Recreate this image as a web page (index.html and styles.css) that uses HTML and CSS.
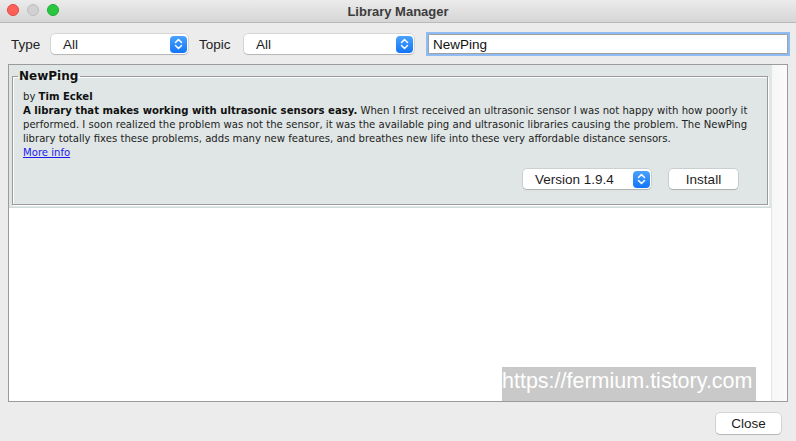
FILE: index.html
```html
<!DOCTYPE html>
<html>
<head>
    <title>Library Manager</title>
    <link rel="stylesheet" href="styles.css">
</head>
<body>
    <div class="window">
        <div class="titlebar">
            <div class="lights">
                <span class="light red"></span>
                <span class="light gray"></span>
                <span class="light green"></span>
            </div>
            <div class="title">Library Manager</div>
        </div>

        <div class="toolbar">
            <span class="label type-label">Type</span>
            <div class="select type-select">
                <span>All</span>
                <span class="stepper">
                    <svg width="9" height="12" viewBox="0 0 9 12"><path d="M1.5 4.5 L4.5 1.5 L7.5 4.5 M1.5 7.5 L4.5 10.5 L7.5 7.5" fill="none" stroke="white" stroke-width="1.5" stroke-linecap="round" stroke-linejoin="round"/></svg>
                </span>
            </div>
            <span class="label topic-label">Topic</span>
            <div class="select topic-select">
                <span>All</span>
                <span class="stepper">
                    <svg width="9" height="12" viewBox="0 0 9 12"><path d="M1.5 4.5 L4.5 1.5 L7.5 4.5 M1.5 7.5 L4.5 10.5 L7.5 7.5" fill="none" stroke="white" stroke-width="1.5" stroke-linecap="round" stroke-linejoin="round"/></svg>
                </span>
            </div>
            <input class="search" type="text" value="NewPing">
        </div>

        <div class="list">
            <div class="items">
                <div class="item">
                    <fieldset class="lib">
                        <legend>NewPing</legend>
                        <div class="lib-text">
                            <div>by <b>Tim Eckel</b></div>
                            <div><b>A library that makes working with ultrasonic sensors easy.</b> When I first received an ultrasonic sensor I was not happy with how poorly it</div>
                            <div>performed. I soon realized the problem was not the sensor, it was the available ping and ultrasonic libraries causing the problem. The NewPing</div>
                            <div>library totally fixes these problems, adds many new features, and breathes new life into these very affordable distance sensors.</div>
                            <div><a href="#">More info</a></div>
                        </div>
                        <div class="lib-actions">
                            <div class="select version-select">
                                <span>Version 1.9.4</span>
                                <span class="stepper">
                                    <svg width="9" height="12" viewBox="0 0 9 12"><path d="M1.5 4.5 L4.5 1.5 L7.5 4.5 M1.5 7.5 L4.5 10.5 L7.5 7.5" fill="none" stroke="white" stroke-width="1.5" stroke-linecap="round" stroke-linejoin="round"/></svg>
                                </span>
                            </div>
                            <button class="btn install">Install</button>
                        </div>
                    </fieldset>
                </div>
            </div>
            <div class="scrollbar"></div>
            <div class="watermark">https://fermium.tistory.com</div>
        </div>

        <div class="footer">
            <button class="btn close">Close</button>
        </div>
    </div>
</body>
</html>
```

FILE: styles.css
```css
body{
    margin: 0;
    background-color: #ececec;
    font-family: "Liberation Sans", Arial, sans-serif;
    overflow: hidden;
}

.window{
    width: 796px;
    height: 441px;
    display: flex;
    flex-direction: column;
}

.titlebar{
    height: 22px;
    border-bottom: 1px solid #b9b9b9;
    background: linear-gradient(#ebebeb, #d6d6d6);
    display: flex;
    align-items: center;
    position: relative;
}

.lights{
    display: flex;
    gap: 8px;
    padding-left: 7px;
    position: absolute;
    top: 4px;
}

.light{
    width: 12px;
    height: 12px;
    border-radius: 50%;
    box-sizing: border-box;
}

.red{
    background-color: #fe5f57;
    border: 1px solid #e2463f;
}

.gray{
    background-color: #d1d1d1;
    border: 1px solid #bdbdbd;
}

.green{
    background-color: #29c740;
    border: 1px solid #1eab31;
}

.title{
    flex: 1;
    text-align: center;
    font-size: 13px;
    font-weight: bold;
    color: #3c3c3c;
}

.toolbar{
    display: flex;
    align-items: center;
    padding: 11px 0 10px 11px;
    height: 20px;
    font-size: 13.5px;
    color: #222;
}

.type-label{
    width: 40px;
}

.topic-label{
    width: 45px;
}

.select{
    height: 20px;
    box-sizing: border-box;
    background-color: white;
    border-radius: 4px;
    box-shadow: 0 0 0 0.5px rgba(0, 0, 0, 0.18), 0 1px 1px rgba(0, 0, 0, 0.15);
    display: flex;
    align-items: center;
    justify-content: space-between;
    padding-left: 12px;
    padding-right: 1px;
    font-size: 13.5px;
    color: #1d1d1d;
}

.stepper{
    width: 17px;
    height: 17px;
    border-radius: 4px;
    background: linear-gradient(#4aa2fd, #1275f6);
    display: flex;
    align-items: center;
    justify-content: center;
}

.type-select{
    width: 137px;
    margin-right: 11px;
}

.topic-select{
    width: 170px;
    margin-right: 14px;
}

.search{
    width: 360px;
    height: 20px;
    box-sizing: border-box;
    border: 1px solid #a0a0a0;
    box-shadow: 0 0 0 2px #8fbcf4;
    padding: 0 4px;
    font-family: "Liberation Sans", Arial, sans-serif;
    font-size: 13.5px;
    color: #111;
    outline: none;
}

.list{
    margin: 0 8px;
    height: 338px;
    box-sizing: border-box;
    border: 1px solid #9b9b9b;
    background-color: white;
    display: flex;
    position: relative;
}

.items{
    flex: 1;
}

.item{
    background-color: #dfe6e5;
    padding: 4px 3px 2px 3px;
    border-bottom: 1px solid #cfdcdc;
}

.lib{
    margin: 0;
    padding: 0 0 15px 5px;
    border: 1px solid #9a9a9a;
    box-shadow: inset 1px 1px 0 white, 1px 1px 0 white;
}

.lib legend{
    padding: 0 2px 0 1px;
    font-family: "DejaVu Sans", Verdana, sans-serif;
    font-size: 12px;
    font-weight: bold;
    color: #111;
}

.lib-text{
    padding-left: 5px;
    margin-top: 7px;
    font-family: "DejaVu Sans", Verdana, sans-serif;
    font-size: 10.1px;
    line-height: 14px;
    color: #222;
    white-space: nowrap;
}

.lib-text b{
    color: #111;
}

.lib-text a{
    color: #1a1aee;
}

.lib-actions{
    display: flex;
    justify-content: flex-end;
    align-items: center;
    margin-top: 9px;
    padding-right: 29px;
}

.version-select{
    width: 128px;
    margin-right: 18px;
}

.btn{
    height: 20px;
    background-color: white;
    border: none;
    border-radius: 4px;
    box-shadow: 0 0 0 0.5px rgba(0, 0, 0, 0.2), 0 1px 1px rgba(0, 0, 0, 0.15);
    font-family: "Liberation Sans", Arial, sans-serif;
    font-size: 13.5px;
    color: #1d1d1d;
    padding: 0;
}

.install{
    width: 69px;
}

.scrollbar{
    width: 15px;
    border-left: 1px solid #e6e6e6;
    background: linear-gradient(to right, #f7f7f7, #fbfbfb);
}

.watermark{
    position: absolute;
    left: 493px;
    top: 302px;
    width: 254px;
    height: 34px;
    background-color: #c9c9c9;
    color: white;
    font-size: 21.5px;
    line-height: 28px;
    white-space: nowrap;
}

.footer{
    display: flex;
    justify-content: flex-end;
    padding: 11px 15px 0 0;
}

.close{
    width: 65px;
    height: 21px;
}
```
